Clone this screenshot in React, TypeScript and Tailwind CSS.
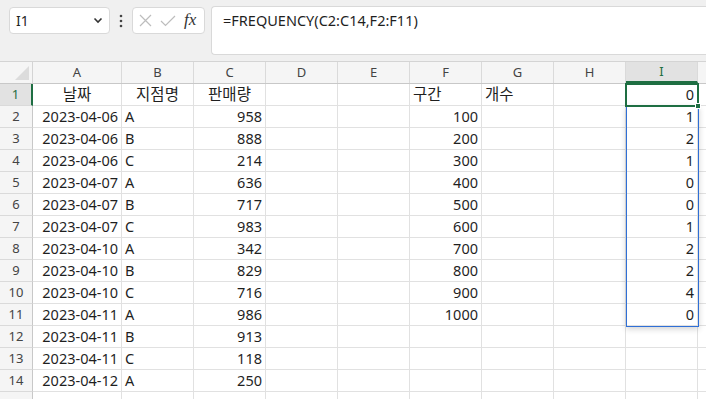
import React from "react";

const cols = ["A", "B", "C", "D", "E", "F", "G", "H", "I", "J"];
const widths = [89, 72, 72, 72, 72, 72, 72, 72, 72, 40];

type Cell = { t: string; a?: "l" | "r" | "c"; k?: boolean };

const data: { [k: number]: { [c: string]: Cell } } = {};
const dates = [
  ["2023-04-06", "A", "958"],
  ["2023-04-06", "B", "888"],
  ["2023-04-06", "C", "214"],
  ["2023-04-07", "A", "636"],
  ["2023-04-07", "B", "717"],
  ["2023-04-07", "C", "983"],
  ["2023-04-10", "A", "342"],
  ["2023-04-10", "B", "829"],
  ["2023-04-10", "C", "716"],
  ["2023-04-11", "A", "986"],
  ["2023-04-11", "B", "913"],
  ["2023-04-11", "C", "118"],
  ["2023-04-12", "A", "250"],
];
const bins = ["100", "200", "300", "400", "500", "600", "700", "800", "900", "1000"];
const freq = ["0", "1", "2", "1", "0", "0", "1", "2", "2", "4", "0"];

data[1] = {
  A: { t: "날짜", a: "c", k: true },
  B: { t: "지점명", a: "c", k: true },
  C: { t: "판매량", a: "c", k: true },
  F: { t: "구간", a: "l", k: true },
  G: { t: "개수", a: "l", k: true },
};
dates.forEach((d, i) => {
  const r = i + 2;
  data[r] = data[r] || {};
  data[r].A = { t: d[0], a: "r" };
  data[r].B = { t: d[1], a: "l" };
  data[r].C = { t: d[2], a: "r" };
});
bins.forEach((b, i) => {
  const r = i + 2;
  data[r] = data[r] || {};
  data[r].F = { t: b, a: "r" };
});
freq.forEach((f, i) => {
  const r = i + 1;
  data[r] = data[r] || {};
  data[r].I = { t: f, a: "r" };
});

const rows = Array.from({ length: 15 }, (_, i) => i + 1);

export default function App() {
  return (
    <div
      className="w-[706px] h-[399px] overflow-hidden bg-white text-[#1f1f1f] relative"
      style={{ fontFamily: "'Noto Sans', 'Noto Sans CJK KR', sans-serif" }}
    >
      {/* formula bar area */}
      <div className="h-[62px] bg-[#f0f0f0] border-b border-[#d4d4d4] flex items-start pt-[6px] pl-[9px]">
        <div className="w-[101px] h-[27px] mt-[1px] bg-white border border-[#d9d9d9] rounded-[4px] flex items-center pl-[6px] pr-[6px] justify-between">
          <span className="text-[14px] leading-none text-[#1f1f1f]">I1</span>
          <svg width="10" height="7" viewBox="0 0 10 7">
            <path d="M1.5 1.5 L5 5 L8.5 1.5" fill="none" stroke="#333" strokeWidth="1.6" />
          </svg>
        </div>
        <div className="w-[22px] h-[27px] mt-[1px] flex items-center justify-center">
          <svg width="4" height="14" viewBox="0 0 4 14">
            <circle cx="2" cy="2" r="1.3" fill="#444" />
            <circle cx="2" cy="7" r="1.3" fill="#444" />
            <circle cx="2" cy="12" r="1.3" fill="#444" />
          </svg>
        </div>
        <div className="w-[73px] h-[27px] mt-[1px] bg-white border border-[#d9d9d9] rounded-[4px] flex items-center pl-[6px] gap-[8px]">
          <svg width="13" height="13" viewBox="0 0 13 13">
            <path d="M1 1 L12 12 M12 1 L1 12" stroke="#bdbdbd" strokeWidth="1.2" />
          </svg>
          <svg width="16" height="12" viewBox="0 0 16 12">
            <path d="M1 6 L5.5 10.5 L15 1" fill="none" stroke="#bdbdbd" strokeWidth="1.2" />
          </svg>
          <span
            className="text-[17px] italic leading-none text-[#333] -mt-[2px]"
            style={{ fontFamily: "'Liberation Serif', 'DejaVu Serif', serif" }}
          >
            fx
          </span>
        </div>
        <div className="ml-[6px] flex-1 h-[49px] bg-white border border-[#d9d9d9] rounded-l-[4px] border-r-0 pl-[11px] pt-[1px]">
          <span className="text-[14.5px] text-[#1f1f1f]">=FREQUENCY(C2:C14,F2:F11)</span>
        </div>
      </div>

      {/* column header row */}
      <div className="flex h-[22px] bg-[#f5f5f5] border-b border-[#c8c8c8]">
        <div className="w-[33px] shrink-0 h-full border-r border-[#d4d4d4] relative">
          <svg className="absolute right-[3px] bottom-[3px]" width="14" height="14" viewBox="0 0 14 14">
            <path d="M14 0 L14 14 L0 14 Z" fill="#dcdcdc" />
          </svg>
        </div>
        {cols.map((c, i) => (
          <div
            key={c}
            style={{ width: widths[i] }}
            className={`shrink-0 h-full flex items-center justify-center text-[13px] border-r border-[#dadada] ${
              c === "I" ? "bg-[#e2e2e2] text-[#1e6e42] border-b-2 border-b-[#1e6e42]" : "text-[#444]"
            }`}
          >
            {c === "J" ? "" : c}
          </div>
        ))}
      </div>

      {/* rows */}
      {rows.map((r) => (
        <div key={r} className="flex h-[22px]">
          <div
            className={`w-[33px] shrink-0 h-full flex items-center justify-center text-[13px] border-b border-[#dadada] ${
              r === 1
                ? "bg-[#e2e2e2] text-[#1e6e42] border-r-2 border-r-[#1e6e42]"
                : "bg-[#f5f5f5] text-[#444] border-r border-r-[#c8c8c8]"
            }`}
          >
            {r === 15 ? "" : r}
          </div>
          {cols.map((c, i) => {
            const cell = data[r]?.[c];
            return (
              <div
                key={c}
                style={{ width: widths[i] }}
                className={`shrink-0 h-full border-r border-b border-[#e1e1e1] flex items-center px-[3px] whitespace-nowrap ${
                  cell?.k ? "text-[15.5px]" : "text-[14.5px]"
                } ${cell?.a === "r" ? "justify-end" : cell?.a === "c" ? "justify-center" : "justify-start"}`}
              >
                {cell?.t}
              </div>
            );
          })}
        </div>
      ))}

      {/* spill range border */}
      <div className="absolute left-[626px] top-[106px] w-[73px] h-[221px] border border-[#2f6fd6] shadow-[0_2px_6px_rgba(0,0,0,0.18)] pointer-events-none" />
      {/* active cell */}
      <div className="absolute left-[625px] top-[83px] w-[74px] h-[24px] border-2 border-[#1e6e42] pointer-events-none" />
      <div className="absolute left-[695px] top-[103px] w-[6px] h-[6px] bg-[#1e6e42] border border-white pointer-events-none" />
    </div>
  );
}
